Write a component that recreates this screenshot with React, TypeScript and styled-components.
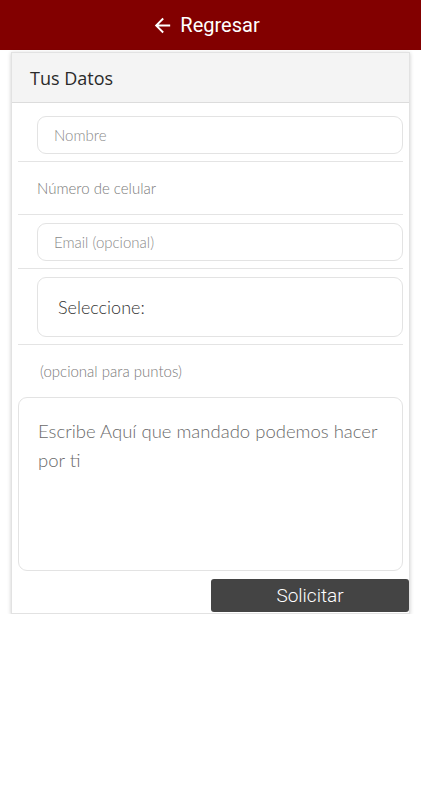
import styled, { createGlobalStyle } from 'styled-components';

const GlobalStyle = createGlobalStyle`
  body {
    margin: 0;
    background: #ffffff;
    font-family: 'Open Sans', 'Noto Sans', sans-serif;
  }
`;

const App: React.FC = () => {
  return (
    <>
      <GlobalStyle />
      <Header>
        <BackLink>
          <svg width='23' height='23' viewBox='0 0 24 24' fill='#ffffff'>
            <path d='M20 11H7.83l5.59-5.59L12 4l-8 8 8 8 1.41-1.41L7.83 13H20v-2z' />
          </svg>
          Regresar
        </BackLink>
      </Header>
      <Card>
        <CardHeader>Tus Datos</CardHeader>
        <CardBody>
          <Row $top={13} $bottom={7}>
            <Field $height={38}>Nombre</Field>
          </Row>
          <Row $height={53}>
            <PlainText>Número de celular</PlainText>
          </Row>
          <Row $top={8} $bottom={7}>
            <Field $height={38}>Email (opcional)</Field>
          </Row>
          <Row $top={8} $bottom={7}>
            <Field $height={60} $dark>
              Seleccione:
            </Field>
          </Row>
          <Row $height={52} $noLine>
            <PlainText $indent={22}>(opcional para puntos)</PlainText>
          </Row>
          <TextArea>Escribe Aquí que mandado podemos hacer por ti</TextArea>
          <ButtonRow>
            <SubmitButton>Solicitar</SubmitButton>
          </ButtonRow>
        </CardBody>
      </Card>
    </>
  );
};
export default App;

const Header = styled.div`
  height: 50px;
  background-color: #820000;
  display: flex;
  align-items: center;
  justify-content: center;
`;

const BackLink = styled.div`
  display: flex;
  align-items: center;
  gap: 6px;
  color: #ffffff;
  font-family: Roboto, 'Liberation Sans', sans-serif;
  font-size: 20px;
  margin-right: 10px;
`;

const Card = styled.div`
  margin: 2px 11px 0 11px;
  border: 1px solid #e2e2e2;
  box-shadow: 0 1px 4px rgba(0, 0, 0, 0.2);
  background: #ffffff;
`;

const CardHeader = styled.div`
  height: 49px;
  background: #f4f4f4;
  border-bottom: 1px solid #dcdcdc;
  display: flex;
  align-items: center;
  padding-left: 18px;
  font-family: 'Open Sans', 'Noto Sans', sans-serif;
  font-size: 18px;
  color: #2a2a2a;
`;

const CardBody = styled.div`
  padding: 0 6px 1px 6px;
`;

const Row = styled.div<{ $top?: number; $bottom?: number; $height?: number; $noLine?: boolean }>`
  padding: ${(p) => p.$top ?? 0}px 0 ${(p) => p.$bottom ?? 0}px 19px;
  ${(p) => (p.$height ? `height: ${p.$height}px;` : '')}
  box-sizing: border-box;
  display: flex;
  align-items: center;
  border-bottom: ${(p) => (p.$noLine ? 'none' : '1px solid #e4e4e4')};
`;

const Field = styled.div<{ $height: number; $dark?: boolean }>`
  flex: 1;
  height: ${(p) => p.$height}px;
  box-sizing: border-box;
  border: 1px solid #e3e3e3;
  border-radius: 9px;
  display: flex;
  align-items: center;
  padding-left: ${(p) => (p.$dark ? 20 : 16)}px;
  font-family: Lato, 'Open Sans', sans-serif;
  font-weight: 300;
  font-size: ${(p) => (p.$dark ? 18 : 15)}px;
  color: ${(p) => (p.$dark ? '#333333' : '#8a8a8a')};
`;

const PlainText = styled.div<{ $indent?: number }>`
  padding-left: ${(p) => (p.$indent ? p.$indent - 19 : 0)}px;
  font-family: Lato, 'Open Sans', sans-serif;
  font-weight: 300;
  font-size: 15px;
  color: #7a7a7a;
`;

const TextArea = styled.div`
  height: 174px;
  box-sizing: border-box;
  border: 1px solid #e3e3e3;
  border-radius: 9px;
  padding: 19px 10px 0 19px;
  font-family: Lato, 'Open Sans', sans-serif;
  font-weight: 300;
  font-size: 18.5px;
  line-height: 29px;
  color: #6a6a6a;
`;

const ButtonRow = styled.div`
  display: flex;
  justify-content: flex-end;
  padding-top: 8px;
  margin-right: -6px;
`;

const SubmitButton = styled.div`
  width: 198px;
  height: 33px;
  background: #444444;
  border-radius: 3px;
  display: flex;
  align-items: center;
  justify-content: center;
  color: #ffffff;
  font-family: Roboto, 'Liberation Sans', sans-serif;
  font-weight: 300;
  font-size: 19px;
`;
